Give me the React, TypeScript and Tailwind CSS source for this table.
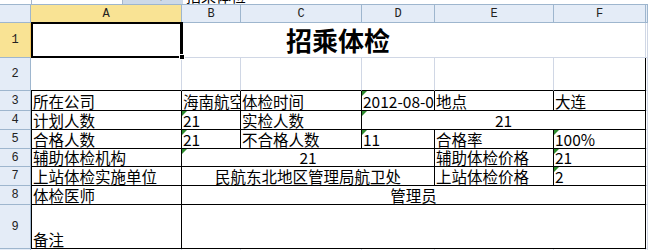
import type { ReactNode } from "react";

const gl = "border-r border-b border-[#d0d7e5]";
const tb = "border-r border-b border-black";
const base =
  "relative flex items-end overflow-hidden whitespace-nowrap px-[1px] text-[15.5px] leading-[17px] text-black";
const rowHead =
  "flex items-center justify-center border-r border-b border-[#9eb6ce] bg-[#e4ecf7] font-['Liberation_Mono',monospace] text-[12px] text-[#222]";
const colHead =
  "flex items-center justify-center border-r border-b border-[#9eb6ce] bg-[#e4ecf7] font-['Liberation_Mono',monospace] text-[12px] text-[#222]";

function Tri() {
  return (
    <span className="absolute left-0 top-0 h-0 w-0 border-t-[5px] border-r-[5px] border-t-[#2e8b2e] border-r-transparent" />
  );
}

function Cell({
  children,
  cls = "",
  tri = false,
}: {
  children?: ReactNode;
  cls?: string;
  tri?: boolean;
}) {
  return (
    <div className={`${base} ${cls}`}>
      {tri && <Tri />}
      {children}
    </div>
  );
}

export default function App() {
  return (
    <div className="h-[250px] w-[648px] overflow-hidden bg-white font-['Noto_Sans_CJK_SC',sans-serif]">
      {/* formula bar, mostly scrolled off */}
      <div className="flex h-[5px] items-end overflow-hidden border-b border-[#9eb6ce] bg-white">
        <div className="w-[31px] shrink-0" />
        <div className="flex h-[16px] w-[92px] shrink-0 items-end border-l border-r border-[#a5b6cc] bg-white pl-[14px] font-['Liberation_Mono',monospace] text-[12px] leading-[16px]">
          A1
        </div>
        <div className="flex h-[16px] w-[60px] shrink-0 items-end justify-center bg-[#cdd9e8] text-[12px] leading-[16px] text-[#555]">
          <span className="ml-4">▾</span>
        </div>
        <div className="flex h-[16px] items-end pl-[3px] text-[15px] leading-[16px]">
          招乘体检
        </div>
      </div>

      <div className="grid grid-cols-[31px_151px_59px_121px_73px_119px_92px_1fr] grid-rows-[18px_35px_33px_20px_19px_19px_18px_19px_19px_44px_20px]">
        {/* column headers */}
        <div className={rowHead} />
        <div className={`${colHead} !bg-[#f9e394] !border-b-[#f2c55c]`}>A</div>
        <div className={colHead}>B</div>
        <div className={colHead}>C</div>
        <div className={colHead}>D</div>
        <div className={colHead}>E</div>
        <div className={colHead}>F</div>
        <div className={colHead} />

        {/* row 1 */}
        <div className={`${rowHead} !bg-[#f9e394] !border-r-[#f2c55c]`}>1</div>
        <div className={`${gl} relative col-span-6 flex items-end justify-center pb-[2px]`}>
          <span className="text-[26px] font-bold leading-[30px] text-black">招乘体检</span>
          <div className="absolute left-0 top-[-1px] h-[36px] w-[152px] border-2 border-r-[3px] border-black">
            <span className="absolute bottom-[-4px] right-[-5px] h-[6px] w-[6px] border border-white bg-black" />
          </div>
        </div>
        <div className={gl} />

        {/* row 2 */}
        <div className={rowHead}>2</div>
        <div className="border-r border-b border-r-[#d0d7e5] border-b-black" />
        <div className="border-r border-b border-r-[#d0d7e5] border-b-black" />
        <div className="border-r border-b border-r-[#d0d7e5] border-b-black" />
        <div className="border-r border-b border-r-[#d0d7e5] border-b-black" />
        <div className="border-r border-b border-r-[#d0d7e5] border-b-black" />
        <div className="border-r border-b border-r-black border-b-black" />
        <div className={gl} />

        {/* row 3 */}
        <div className={rowHead}>3</div>
        <Cell cls={`${tb} border-l`}>所在公司</Cell>
        <Cell cls={tb}>海南航空</Cell>
        <Cell cls={tb}>体检时间</Cell>
        <Cell cls={tb} tri>
          2012-08-08
        </Cell>
        <Cell cls={tb}>地点</Cell>
        <Cell cls={tb}>大连</Cell>
        <div className={gl} />

        {/* row 4 */}
        <div className={rowHead}>4</div>
        <Cell cls={`${tb} border-l`}>计划人数</Cell>
        <Cell cls={tb} tri>
          21
        </Cell>
        <Cell cls={tb}>实检人数</Cell>
        <Cell cls={`${tb} col-span-3 justify-center`} tri>
          21
        </Cell>
        <div className={gl} />

        {/* row 5 */}
        <div className={rowHead}>5</div>
        <Cell cls={`${tb} border-l`}>合格人数</Cell>
        <Cell cls={tb} tri>
          21
        </Cell>
        <Cell cls={tb}>不合格人数</Cell>
        <Cell cls={tb} tri>
          11
        </Cell>
        <Cell cls={tb}>合格率</Cell>
        <Cell cls={tb} tri>
          100%
        </Cell>
        <div className={gl} />

        {/* row 6 */}
        <div className={rowHead}>6</div>
        <Cell cls={`${tb} border-l`}>辅助体检机构</Cell>
        <Cell cls={`${tb} col-span-3 justify-center`} tri>
          21
        </Cell>
        <Cell cls={tb}>辅助体检价格</Cell>
        <Cell cls={tb} tri>
          21
        </Cell>
        <div className={gl} />

        {/* row 7 */}
        <div className={rowHead}>7</div>
        <Cell cls={`${tb} border-l`}>上站体检实施单位</Cell>
        <Cell cls={`${tb} col-span-3 justify-center`}>民航东北地区管理局航卫处</Cell>
        <Cell cls={tb}>上站体检价格</Cell>
        <Cell cls={tb} tri>
          2
        </Cell>
        <div className={gl} />

        {/* row 8 */}
        <div className={rowHead}>8</div>
        <Cell cls={`${tb} border-l`}>体检医师</Cell>
        <Cell cls={`${tb} col-span-5 justify-center`}>管理员</Cell>
        <div className={gl} />

        {/* row 9 */}
        <div className={rowHead}>9</div>
        <Cell cls={`${tb} border-l`}>备注</Cell>
        <Cell cls={`${tb} col-span-5`} />
        <div className={gl} />

        {/* row 10 */}
        <div className={rowHead}>10</div>
        <div className={gl} />
        <div className={gl} />
        <div className={gl} />
        <div className={gl} />
        <div className={gl} />
        <div className={gl} />
        <div className={gl} />
      </div>
    </div>
  );
}
